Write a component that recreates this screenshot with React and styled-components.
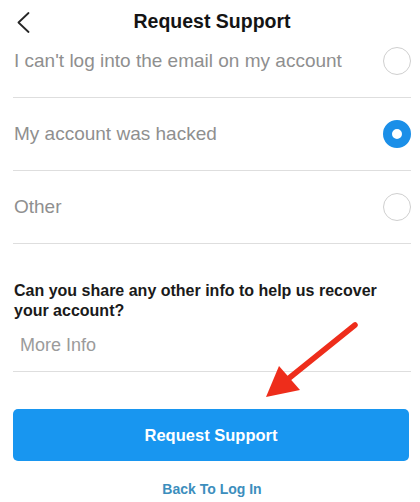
import React, { useState } from "react";
import styled, { createGlobalStyle } from "styled-components";

const options = [
	"I can't log into the email on my account",
	"My account was hacked",
	"Other",
];

export default function App() {
	const [picked, setPicked] = useState(1);

	return (
		<>
			<GlobalStyle />
			<Page>
				<Header>
					<Back aria-label="Back">
						<svg width="13" height="21" viewBox="0 0 13 21">
							<polyline
								points="11.5,1 1.5,10.5 11.5,20"
								fill="none"
								stroke="#262626"
								strokeWidth="1.8"
								strokeLinecap="round"
								strokeLinejoin="round"
							/>
						</svg>
					</Back>
					<Title>Request Support</Title>
					<span />
				</Header>

				{options.map((label, i) => (
					<Option key={label} $first={i === 0} onClick={() => setPicked(i)}>
						<OptionText>{label}</OptionText>
						<Radio $on={picked === i} />
					</Option>
				))}

				<Question>
					Can you share any other info to help us recover your account?
				</Question>
				<Field placeholder="More Info" />

				<Submit>Request Support</Submit>
				<BackLink>Back To Log In</BackLink>

				{/* red annotation arrow drawn over the screenshot */}
				<Arrow width="420" height="502" viewBox="0 0 420 502">
					<line
						x1="355"
						y1="325"
						x2="288"
						y2="379"
						stroke="#ee2d1b"
						strokeWidth="5.5"
						strokeLinecap="round"
					/>
					<polygon points="266,397 279,366 300,390" fill="#ee2d1b" />
				</Arrow>
			</Page>
		</>
	);
}

const GlobalStyle = createGlobalStyle`
	* {
		box-sizing: border-box;
	}
	body {
		margin: 0;
		background: #fff;
		font-family: "Liberation Sans", Arial, sans-serif;
	}
`;

const Page = styled.div`
	position: relative;
	width: 420px;
	height: 502px;
	overflow: hidden;
	padding: 0 9px 0 13px;
	display: flex;
	flex-direction: column;
`;

const Header = styled.div`
	height: 42px;
	display: grid;
	grid-template-columns: 1fr auto 1fr;
	align-items: center;
`;

const Back = styled.button`
	justify-self: start;
	background: none;
	border: none;
	padding: 0;
	margin: 2px 0 0 4px;
	display: flex;
	cursor: pointer;
`;

const Title = styled.h1`
	margin: 0;
	font-size: 19.5px;
	font-weight: 700;
	color: #141414;
`;

const Option = styled.div`
	height: ${(p) => (p.$first ? "56px" : "73px")};
	padding: ${(p) => (p.$first ? "0 0 17px 1px" : "0 0 0 1px")};
	border-bottom: 1px solid #dedede;
	display: flex;
	align-items: center;
	justify-content: space-between;
	cursor: pointer;
`;

const OptionText = styled.span`
	font-size: 19px;
	color: #8f8f8f;
`;

const Radio = styled.span`
	width: 28px;
	height: 28px;
	border-radius: 50%;
	flex-shrink: 0;
	background: #fff;
	border: ${(p) => (p.$on ? "9px solid #1b8fe8" : "1.5px solid #cfcfcf")};
`;

const Question = styled.p`
	margin: 37px 0 0 1px;
	font-size: 16px;
	line-height: 19.5px;
	font-weight: 700;
	color: #1a1a1a;
`;

const Field = styled.input`
	height: 52px;
	width: 100%;
	border: none;
	border-bottom: 1px solid #dedede;
	padding: 0 0 0 7px;
	font-family: inherit;
	font-size: 18px;
	color: #262626;
	outline: none;

	&::placeholder {
		color: #9b9b9b;
	}
`;

const Submit = styled.button`
	margin-top: 37px;
	width: calc(100% - 2px);
	height: 52px;
	border: none;
	border-radius: 5px;
	background: #1896f0;
	color: #fff;
	font-family: inherit;
	font-size: 16.5px;
	font-weight: 700;
	cursor: pointer;
`;

const BackLink = styled.a`
	margin-top: 18px;
	align-self: center;
	font-size: 14px;
	line-height: 20px;
	font-weight: 700;
	color: #3c8ebd;
	cursor: pointer;
`;

const Arrow = styled.svg`
	position: absolute;
	left: 0;
	top: 0;
	pointer-events: none;
`;
